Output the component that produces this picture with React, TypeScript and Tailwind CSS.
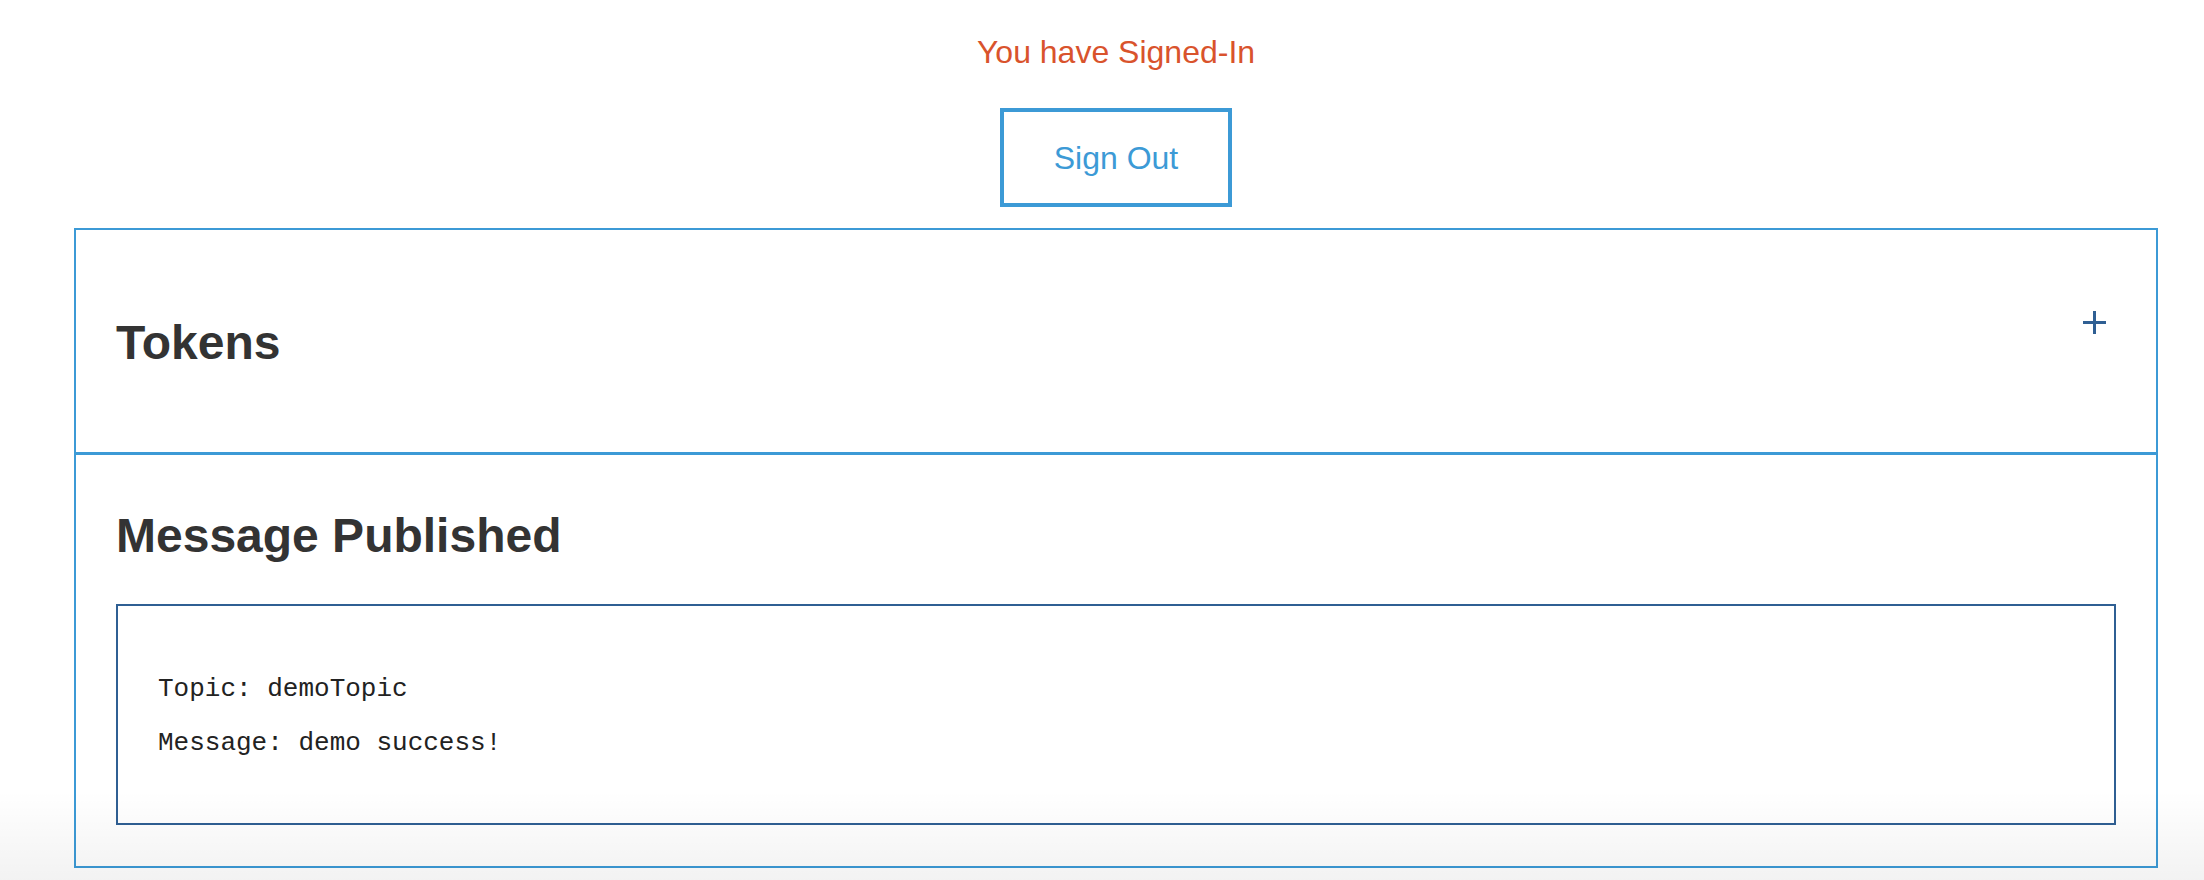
const sans = "font-['Liberation_Sans',Arial,sans-serif]";

function PlusIcon() {
  return (
    <svg width="23" height="23" viewBox="0 0 23 23" className="text-[#2f5f93]">
      <path d="M11.5 0V23M0 11.5H23" stroke="currentColor" strokeWidth="3" fill="none" />
    </svg>
  );
}

export default function App() {
  return (
    <div className={`relative h-[880px] w-full overflow-hidden bg-white ${sans}`}>
      <div className="flex flex-col items-center pl-[74px] pr-[46px] pt-[34px]">
        <p className="text-[32px] leading-[36px] text-[#d9532c]">You have Signed-In</p>
        <button className="mt-[38px] flex h-[99px] w-[232px] items-center justify-center border-4 border-[#3c9ad6] text-[32px] text-[#3c9ad6]">
          Sign Out
        </button>

        <div className="mt-[21px] w-full border-2 border-[#3c9ad6]">
          {/* collapsed tokens panel */}
          <div className="flex h-[225px] items-start justify-between border-b-[3px] border-[#3c9ad6] pl-[40px] pr-[50px] pt-[81px]">
            <h2 className="mt-[4px] text-[48px] font-bold leading-[56px] text-[#333333]">Tokens</h2>
            <PlusIcon />
          </div>

          <div className="px-[40px] pb-[41px] pt-[53px]">
            <h2 className="text-[48px] font-bold leading-[56px] text-[#333333]">Message Published</h2>
            <div className="mt-[40px] border-2 border-[#2f5f93] pb-[65px] pl-[40px] pt-[68px] font-['Liberation_Mono','Courier_New',monospace] text-[26px] leading-[30px] text-[#222222]">
              <p>Topic: demoTopic</p>
              <p className="mt-[24px]">Message: demo success!</p>
            </div>
          </div>
        </div>
      </div>

      {/* soft shade along the bottom edge of the window */}
      <div className="pointer-events-none absolute inset-x-0 bottom-0 h-[90px] bg-gradient-to-b from-black/0 to-black/[0.05]" />
    </div>
  );
}
